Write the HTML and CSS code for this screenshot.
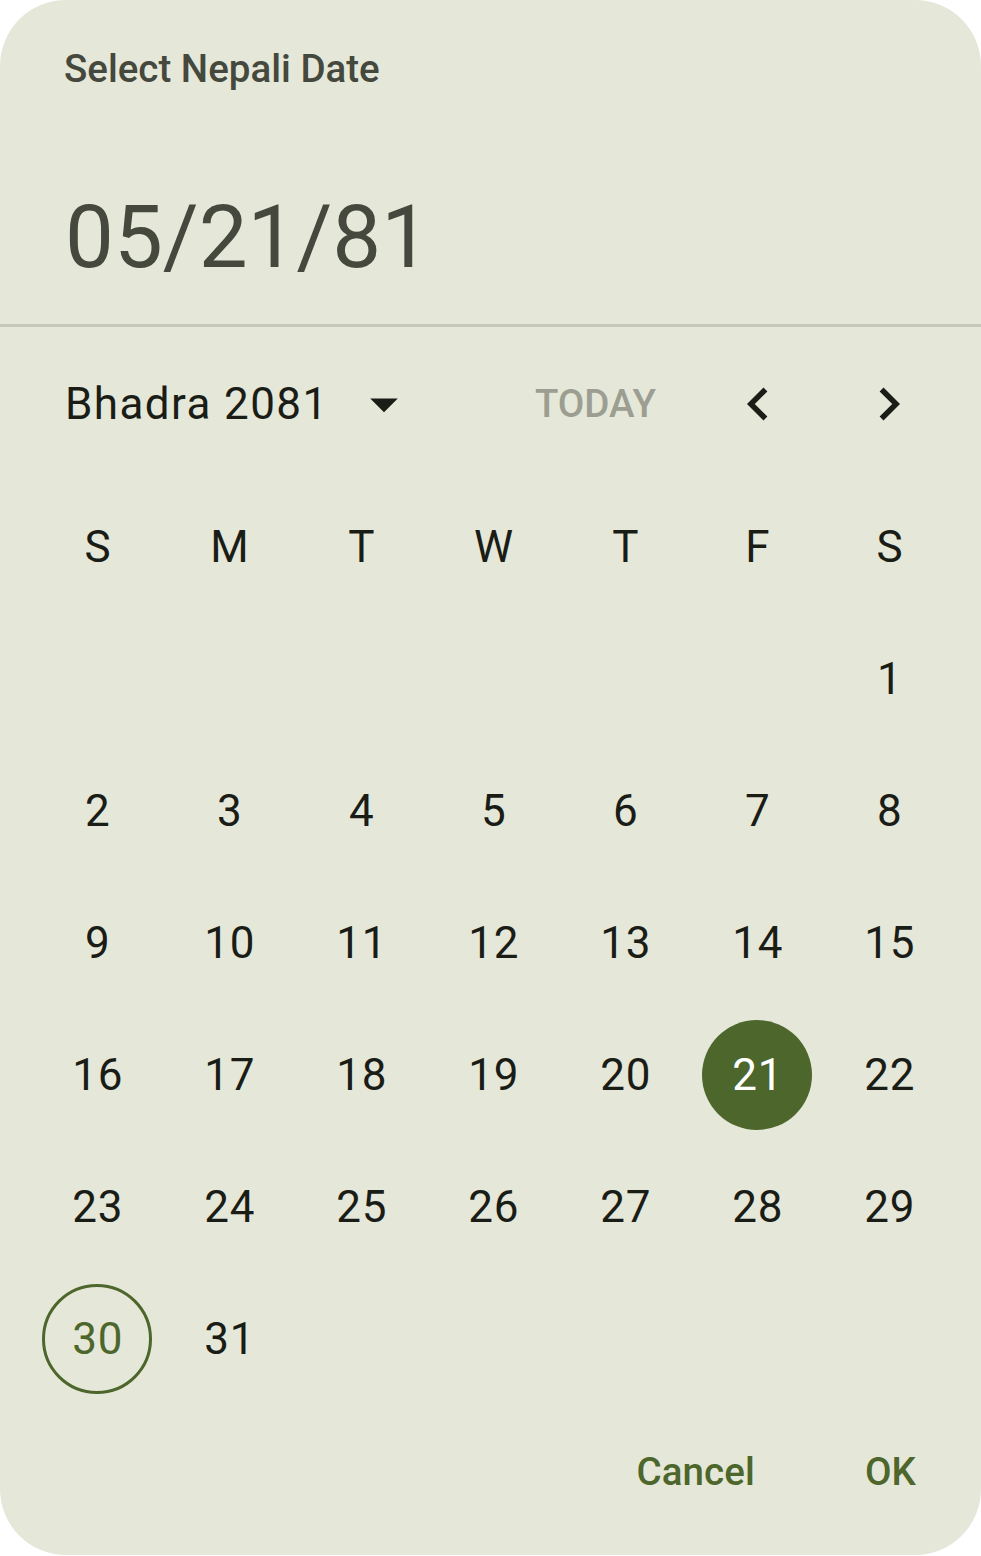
FILE: index.html
```html
<!DOCTYPE html>
<html lang="en">
<head>
<meta charset="utf-8">
<title>Select Nepali Date</title>
<link rel="stylesheet" href="styles.css">
</head>
<body>
<div class="dialog">
  <header class="dialog-header">
    <div class="dialog-title">Select Nepali Date</div>
    <div class="dialog-date">05/21/81</div>
  </header>
  <div class="divider"></div>

  <div class="month-bar">
    <button class="month-select" type="button">
      <span class="month-label">Bhadra 2081</span>
      <svg class="icon" viewBox="0 0 24 24" aria-hidden="true"><path d="M7 10l5 5 5-5z"/></svg>
    </button>
    <button class="today-btn" type="button" disabled>TODAY</button>
    <button class="nav-btn nav-prev" type="button" aria-label="Previous month">
      <svg class="icon" viewBox="0 0 24 24" aria-hidden="true"><path d="M15.41 7.41L14 6l-6 6 6 6 1.41-1.41L10.83 12z"/></svg>
    </button>
    <button class="nav-btn nav-next" type="button" aria-label="Next month">
      <svg class="icon" viewBox="0 0 24 24" aria-hidden="true"><path d="M10 6L8.59 7.41 13.17 12l-4.58 4.59L10 18l6-6z"/></svg>
    </button>
  </div>

  <div class="calendar">
    <div class="weekday">S</div>
    <div class="weekday">M</div>
    <div class="weekday">T</div>
    <div class="weekday">W</div>
    <div class="weekday">T</div>
    <div class="weekday">F</div>
    <div class="weekday">S</div>

    <div class="day empty"></div>
    <div class="day empty"></div>
    <div class="day empty"></div>
    <div class="day empty"></div>
    <div class="day empty"></div>
    <div class="day empty"></div>
    <div class="day"><span class="day-num">1</span></div>

    <div class="day"><span class="day-num">2</span></div>
    <div class="day"><span class="day-num">3</span></div>
    <div class="day"><span class="day-num">4</span></div>
    <div class="day"><span class="day-num">5</span></div>
    <div class="day"><span class="day-num">6</span></div>
    <div class="day"><span class="day-num">7</span></div>
    <div class="day"><span class="day-num">8</span></div>

    <div class="day"><span class="day-num">9</span></div>
    <div class="day"><span class="day-num">10</span></div>
    <div class="day"><span class="day-num">11</span></div>
    <div class="day"><span class="day-num">12</span></div>
    <div class="day"><span class="day-num">13</span></div>
    <div class="day"><span class="day-num">14</span></div>
    <div class="day"><span class="day-num">15</span></div>

    <div class="day"><span class="day-num">16</span></div>
    <div class="day"><span class="day-num">17</span></div>
    <div class="day"><span class="day-num">18</span></div>
    <div class="day"><span class="day-num">19</span></div>
    <div class="day"><span class="day-num">20</span></div>
    <div class="day"><span class="day-num selected">21</span></div>
    <div class="day"><span class="day-num">22</span></div>

    <div class="day"><span class="day-num">23</span></div>
    <div class="day"><span class="day-num">24</span></div>
    <div class="day"><span class="day-num">25</span></div>
    <div class="day"><span class="day-num">26</span></div>
    <div class="day"><span class="day-num">27</span></div>
    <div class="day"><span class="day-num">28</span></div>
    <div class="day"><span class="day-num">29</span></div>

    <div class="day"><span class="day-num today">30</span></div>
    <div class="day"><span class="day-num">31</span></div>
  </div>

  <div class="actions">
    <button class="text-btn" type="button">Cancel</button>
    <button class="text-btn" type="button">OK</button>
  </div>
</div>
</body>
</html>
```

FILE: styles.css
```css
* {
  box-sizing: border-box;
}

html, body {
  margin: 0;
  padding: 0;
  background: #ffffff;
}

body {
  font-family: Roboto, "Noto Sans", "Liberation Sans", sans-serif;
  color: #1a1c16;
}

button {
  font-family: inherit;
  background: none;
  border: 0;
  padding: 0;
  margin: 0;
  color: inherit;
  cursor: pointer;
}

.dialog {
  width: 981px;
  height: 1555px;
  background: #e5e7d9;
  border-radius: 66px;
  overflow: hidden;
}

/* header: title and selected date */
.dialog-header {
  padding: 46px 0 35px 64px;
  color: #45483c;
}

.dialog-title {
  font-size: 38.5px;
  font-weight: 500;
  line-height: 46px;
}

.dialog-date {
  margin-top: 93px;
  padding-left: 1px;
  font-size: 87px;
  font-weight: 400;
  line-height: 104px;
}

.divider {
  height: 3px;
  background: #c5c8ba;
}

/* month selector and navigation */
.month-bar {
  height: 154px;
  display: flex;
  align-items: center;
  padding-left: 65px;
  padding-right: 59px;
}

.month-select {
  display: flex;
  align-items: center;
  gap: 22px;
  font-size: 44px;
  line-height: 52px;
  color: #1a1c16;
}

.month-label {
  letter-spacing: 1.4px;
}

.icon {
  width: 66px;
  height: 66px;
  display: block;
  fill: #1a1c16;
}

.today-btn {
  margin-left: auto;
  font-size: 38.5px;
  font-weight: 500;
  line-height: 46px;
  color: #9c9e92;
  cursor: default;
}

.nav-btn {
  width: 66px;
  height: 66px;
}

.nav-prev {
  margin-left: 69px;
}

.nav-next {
  margin-left: 65px;
}

/* calendar grid */
.calendar {
  display: grid;
  grid-template-columns: repeat(7, 132px);
  grid-auto-rows: 132px;
  padding-left: 31px;
}

.weekday,
.day {
  display: flex;
  align-items: center;
  justify-content: center;
  font-size: 44px;
  line-height: 52px;
  color: #1a1c16;
}

.weekday {
  padding-left: 1px;
}

.day-num {
  width: 110px;
  height: 110px;
  border-radius: 50%;
  display: flex;
  align-items: center;
  justify-content: center;
  letter-spacing: 0.7px;
  padding-left: 1.4px;
}

.day-num.selected {
  background: #4c662b;
  color: #ffffff;
}

.day-num.today {
  border: 3px solid #4c662b;
  color: #4c662b;
}

/* dialog actions */
.actions {
  display: flex;
  justify-content: flex-end;
  gap: 110px;
  padding-top: 44px;
  padding-right: 65px;
}

.text-btn {
  font-size: 38.5px;
  font-weight: 500;
  line-height: 46px;
  color: #4c662b;
  letter-spacing: 0.1px;
}
```
